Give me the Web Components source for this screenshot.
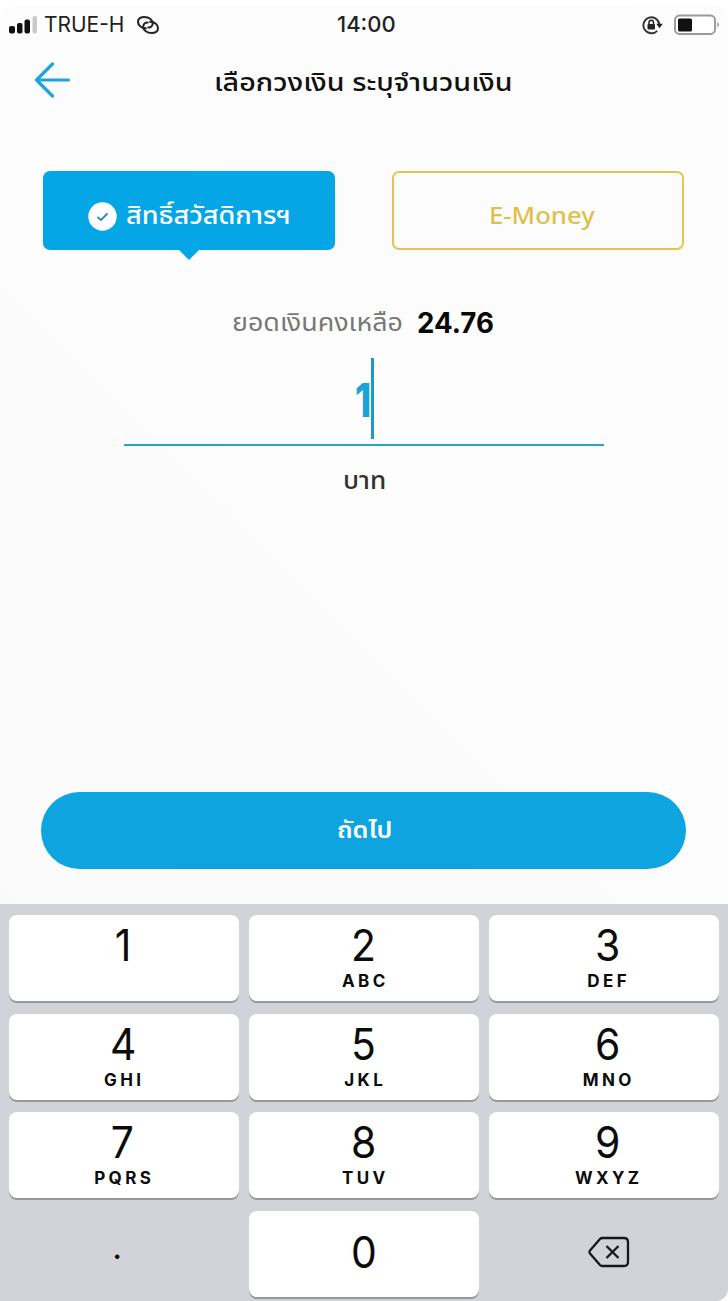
<!DOCTYPE html>
<html lang="th">
<head>
<meta charset="utf-8">
<title>เลือกวงเงิน ระบุจำนวนเงิน</title>
<style>
  html, body { margin: 0; padding: 0; }
  body {
    width: 728px;
    height: 1301px;
    overflow: hidden;
    background: #fff;
    font-family: Inter, "Noto Sans Thai", "Noto Sans", "Liberation Sans", sans-serif;
    color: #111;
  }
</style>
</head>
<body>
<pay-screen></pay-screen>

<script>
// Text squeezed or stretched to a fixed width
class FitText extends HTMLElement {
  constructor() {
    super();
    this.attachShadow({ mode: 'open' });
  }

  connectedCallback() {
    const width = Number(this.getAttribute('w'));
    this.shadowRoot.innerHTML = `
      <style>
        :host { display: block; flex: none; width: ${width}px; line-height: 1.3; white-space: nowrap; }
        span { display: inline-block; transform-origin: 0 50%; }
      </style>
      <span><slot></slot></span>
    `;
    const span = this.shadowRoot.querySelector('span');
    requestAnimationFrame(() => {
      const natural = span.offsetWidth;
      if (natural) span.style.transform = `scaleX(${width / natural})`;
    });
  }
}
customElements.define('fit-text', FitText);

class StatusBar extends HTMLElement {
  constructor() {
    super();
    this.attachShadow({ mode: 'open' });
  }

  connectedCallback() {
    this.shadowRoot.innerHTML = `
      <style>
        :host {
          display: grid;
          grid-template-columns: 1fr 59px 1fr;
          align-items: center;
          height: 37px;
          padding: 0 8px 0 9px;
          font-size: 22px;
          color: #222;
        }
        .left, .right { display: flex; align-items: center; }
        .right { justify-content: flex-end; }
        .link { margin-left: 12px; }
        .lock { margin-right: 11px; }
        .carrier { margin-left: 7px; }
        .time { font-weight: 500; margin-left: 2px; }
        svg { display: block; flex: none; }
      </style>
      <div class="left">
        <svg width="28" height="18" viewBox="0 0 28 18">
          <rect x="0" y="10" width="6" height="7.500" rx="2" fill="#111"/>
          <rect x="8" y="7" width="5.500" height="10.500" rx="2" fill="#111"/>
          <rect x="15.500" y="3.500" width="5.500" height="14" rx="2" fill="#111"/>
          <rect x="23.500" y="0" width="4.500" height="17.500" rx="2" fill="#c9c9c9"/>
        </svg>
        <fit-text class="carrier" w="80">TRUE-H</fit-text>
        <svg class="link" width="24" height="20" viewBox="0 0 24.400 20" fill="none" stroke="#222" stroke-width="2.100" stroke-linecap="round">
          <path d="M10 13.300C6 13.500 2 10.500 2 6.700C2 3.500 5 1.800 8.500 1.800C13 1.800 17 4.500 17 8.200C17 11 15 12.500 12.500 12.500"/>
          <path d="M14.400 6.700C18.400 6.500 22.400 9.500 22.400 13.300C22.400 16.500 19.400 18.200 15.900 18.200C11.400 18.200 7.400 15.500 7.400 11.800C7.400 9 9.400 7.500 11.900 7.500"/>
        </svg>
      </div>
      <fit-text class="time" w="59">14:00</fit-text>
      <div class="right">
        <svg class="lock" width="21" height="20" viewBox="0 0 21 20">
          <path d="M15.200 15.800A8 8 0 1 1 17.300 9" fill="none" stroke="#333" stroke-width="1.900"/>
          <path d="M14.300 8.700H20.800L17.500 13.200Z" fill="#222"/>
          <rect x="5.500" y="9" width="7.500" height="5.500" rx="1" fill="#222"/>
          <path d="M7 9.500V7.500A2.250 2.250 0 0 1 11.500 7.500V9.500" fill="none" stroke="#222" stroke-width="1.500"/>
        </svg>
        <svg width="46" height="22" viewBox="0 0 46 22">
          <rect x="1" y="1.500" width="40" height="18.500" rx="4.500" fill="#fff" stroke="#999" stroke-width="1.900"/>
          <rect x="4" y="4.500" width="14" height="13" rx="1.500" fill="#111"/>
          <path d="M43.500 8Q46 10.700 43.500 13.500Z" fill="#777"/>
        </svg>
      </div>
    `;
  }
}
customElements.define('status-bar', StatusBar);

class NavHeader extends HTMLElement {
  constructor() {
    super();
    this.attachShadow({ mode: 'open' });
  }

  connectedCallback() {
    this.shadowRoot.innerHTML = `
      <style>
        :host {
          display: grid;
          grid-template-columns: 1fr 299px 1fr;
          align-items: center;
          height: 74px;
          padding: 0 34px;
          font-size: 25.500px;
          font-weight: 500;
        }
        svg { display: block; }
        fit-text { margin: 4px 0 0 -1px; }
      </style>
      <svg width="37" height="36" viewBox="0 0 37 36" fill="none" stroke="#1ba5dc" stroke-width="3.200" stroke-linejoin="round" stroke-linecap="round">
        <path d="M34.500 18H2.500M18.500 2L2.500 18L18.500 34"/>
      </svg>
      <fit-text w="299"><slot></slot></fit-text>
    `;
  }
}
customElements.define('nav-header', NavHeader);

class WalletTab extends HTMLElement {
  constructor() {
    super();
    this.attachShadow({ mode: 'open' });
  }

  connectedCallback() {
    this.shadowRoot.innerHTML = `
      <style>
        :host {
          box-sizing: border-box;
          display: flex;
          align-items: center;
          position: relative;
          width: 292px;
          height: 79px;
          padding: 14px 0 0 95px;
          border: 2px solid #e2c654;
          border-radius: 7px;
          color: #dfc04c;
          font-family: "Noto Sans Thai", "Open Sans", sans-serif;
          font-size: 24px;
          font-weight: 500;
        }
        :host([selected]) {
          padding-left: 43px;
          gap: 9px;
          border-color: #04a6e5;
          background: #04a6e5;
          color: #fff;
        }
        svg { display: none; flex: none; margin-top: -3px; }
        :host([selected]) svg { display: block; }
        /* pointer under the selected tab */
        :host([selected])::after {
          content: "";
          position: absolute;
          left: 133px;
          top: 76px;
          border: 11px solid transparent;
          border-top-color: #04a6e5;
          border-bottom: 0;
        }
      </style>
      <svg width="29" height="29" viewBox="0 0 29 29">
        <circle cx="14.500" cy="14.500" r="14.200" fill="#fff"/>
        <path d="M9.500 15L13 18L19.500 11.500" fill="none" stroke="#278eb5" stroke-width="1.900"/>
      </svg>
      <slot></slot>
    `;
  }
}
customElements.define('wallet-tab', WalletTab);

class AmountField extends HTMLElement {
  constructor() {
    super();
    this.attachShadow({ mode: 'open' });
  }

  connectedCallback() {
    this.shadowRoot.innerHTML = `
      <style>
        :host { display: flex; flex-direction: column; align-items: center; }
        .value {
          box-sizing: border-box;
          display: flex;
          align-items: center;
          width: 480px;
          height: 88px;
          padding: 0 0 5px 231px;
          border-bottom: 2px solid #2ba2c9;
          color: #1aa3d6;
          font-size: 46px;
          font-weight: 800;
        }
        .value fit-text { margin-top: 5px; }
        .caret { width: 3px; height: 81px; background: #1b9bca; }
        .unit {
          margin-top: 18px;
          font-size: 25px;
          font-weight: 500;
          color: #333;
        }
      </style>
      <div class="value">
        <fit-text w="16">${this.getAttribute('value')}</fit-text>
        <div class="caret"></div>
      </div>
      <fit-text class="unit" w="43">${this.getAttribute('unit')}</fit-text>
    `;
  }
}
customElements.define('amount-field', AmountField);

class PrimaryButton extends HTMLElement {
  constructor() {
    super();
    this.attachShadow({ mode: 'open' });
  }

  connectedCallback() {
    this.shadowRoot.innerHTML = `
      <style>
        :host { display: block; }
        button {
          display: flex;
          align-items: center;
          justify-content: center;
          width: 645px;
          height: 77px;
          padding: 0 2px 0 0;
          border: none;
          border-radius: 39px;
          background: #0ea4df;
          color: #fff;
          font: inherit;
          font-size: 23px;
          font-weight: 600;
        }
      </style>
      <button><fit-text w="55"><slot></slot></fit-text></button>
    `;
  }
}
customElements.define('primary-button', PrimaryButton);

class PadKey extends HTMLElement {
  constructor() {
    super();
    this.attachShadow({ mode: 'open' });
  }

  connectedCallback() {
    this.shadowRoot.innerHTML = `
      <style>
        :host {
          box-sizing: border-box;
          display: flex;
          flex-direction: column;
          align-items: center;
          height: 86px;
          padding-top: 5px;
          border-radius: 8px;
          background: #fff;
          box-shadow: 0 2px 0 #97989c;
          color: #0c0c0c;
        }
        :host([plain]) { background: none; box-shadow: none; justify-content: center; padding-top: 0; }
        :host([center]) { justify-content: center; padding: 0 0 4px; }
        .digit { font-size: 44px; line-height: 50px; transform: scaleX(.93); }
        :host([plain]) .digit { transform: none; }
        .letters {
          font-size: 17px;
          line-height: 22px;
          font-weight: 700;
          letter-spacing: 3.400px;
          margin-right: -3px;
        }
      </style>
      <div class="digit"><slot></slot></div>
      <div class="letters">${this.getAttribute('letters') || ''}</div>
    `;
    if (!this.hasAttribute('letters')) this.shadowRoot.querySelector('.letters').remove();
  }
}
customElements.define('pad-key', PadKey);

class NumberPad extends HTMLElement {
  constructor() {
    super();
    this.attachShadow({ mode: 'open' });
  }

  connectedCallback() {
    const letters = ['', 'ABC', 'DEF', 'GHI', 'JKL', 'MNO', 'PQRS', 'TUV', 'WXYZ'];
    const keys = letters
      .map((l, i) => `<pad-key${l ? ` letters="${l}"` : ''}>${i + 1}</pad-key>`)
      .join('');
    this.shadowRoot.innerHTML = `
      <style>
        :host {
          box-sizing: border-box;
          display: grid;
          grid-template-columns: repeat(3, 229.500px);
          grid-auto-rows: 86px;
          gap: 12.700px 10.500px;
          height: 397px;
          padding: 11px 9px 0;
          border-radius: 0 0 12px 0;
          background: #d1d3d8;
        }
        pad-key:nth-of-type(3n + 1):not([plain]) { padding-right: 2px; }
        pad-key:nth-of-type(3n):not([plain]) { padding-left: 7px; }
        svg { display: block; margin: -4px 0 0 10px; }
        .dot { display: block; margin: -15px 13px 0 0; font-size: 34px; }
      </style>
      ${keys}
      <pad-key plain><span class="dot">.</span></pad-key>
      <pad-key center>0</pad-key>
      <pad-key plain>
        <svg width="42" height="32" viewBox="0 0 42 32" fill="none" stroke="#16181c" stroke-width="2.300" stroke-linejoin="round">
          <path d="M14 2H36Q40 2 40 6V26Q40 30 36 30H14Q13 30 12 29L2 17.500Q1 16 2 14.500L12 3Q13 2 14 2Z"/>
          <path d="M18.500 10L30.500 22M30.500 10L18.500 22"/>
        </svg>
      </pad-key>
    `;
  }
}
customElements.define('number-pad', NumberPad);

class PayScreen extends HTMLElement {
  constructor() {
    super();
    this.attachShadow({ mode: 'open' });
  }

  connectedCallback() {
    this.shadowRoot.innerHTML = `
      <style>
        :host {
          box-sizing: border-box;
          display: flex;
          flex-direction: column;
          width: 728px;
          height: 1301px;
          padding-top: 6px;
        }
        main {
          display: flex;
          flex-direction: column;
          align-items: center;
          height: 898px;
          border-radius: 14px 14px 0 0;
          background: linear-gradient(45deg, #fafafb 0%, #fcfcfd 42%, #fdfdfd 42%, #fcfcfc 100%);
        }
        status-bar, nav-header { align-self: stretch; }
        .tabs { display: flex; gap: 57px; margin: 54px 2px 0 0; }
        .balance {
          display: flex;
          align-items: center;
          gap: 14px;
          height: 40px;
          margin: 53px 2px 0 0;
          font-size: 24.500px;
          color: #777;
        }
        .sum { font-size: 28px; font-weight: 700; color: #080808; }
        amount-field { margin-top: 15px; }
        primary-button { margin: auto 1px 35px 0; }
      </style>
      <main>
        <status-bar></status-bar>
        <nav-header>เลือกวงเงิน ระบุจำนวนเงิน</nav-header>
        <div class="tabs">
          <wallet-tab selected><fit-text w="165">สิทธิ์สวัสดิการฯ</fit-text></wallet-tab>
          <wallet-tab><fit-text w="106">E-Money</fit-text></wallet-tab>
        </div>
        <div class="balance">
          <fit-text w="171">ยอดเงินคงเหลือ</fit-text>
          <fit-text class="sum" w="77">24.76</fit-text>
        </div>
        <amount-field value="1" unit="บาท"></amount-field>
        <primary-button>ถัดไป</primary-button>
      </main>
      <number-pad></number-pad>
    `;
  }
}
customElements.define('pay-screen', PayScreen);
</script>
</body>
</html>
